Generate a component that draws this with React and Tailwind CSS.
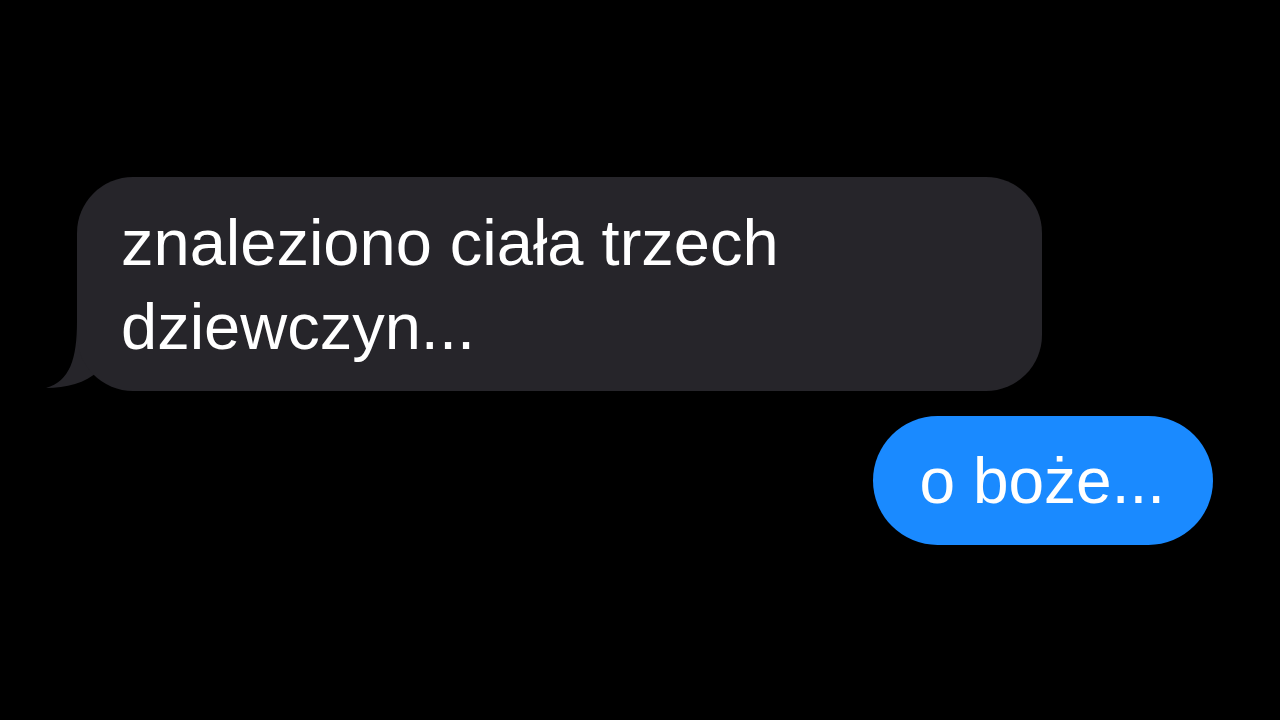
export default function App() {
  return (
    <div
      className="h-screen w-full overflow-hidden bg-black flex flex-col pt-[177px]"
      style={{ fontFamily: '"Liberation Sans", Arial, sans-serif' }}
    >
      {/* incoming message */}
      <div className="relative ml-[77px] w-[965px]">
        <svg
          className="absolute left-[-37px] bottom-0"
          width="80"
          height="70"
          viewBox="0 0 80 70"
        >
          <path
            d="M37 0 C37 38 30 60 6 67 C26 67 46 62 58 50 L75 30 L75 0 Z"
            fill="#26252a"
          />
        </svg>
        <div className="relative rounded-[56px] bg-[#26252a] pl-[44px] pr-10 pt-[24px] pb-[22px]">
          <p className="text-[65px] leading-[84px] text-white">
            znaleziono ciała trzech
            <br />
            dziewczyn...
          </p>
        </div>
      </div>

      {/* outgoing message */}
      <div className="self-end mr-[67px] mt-[25px] h-[129px] rounded-full bg-[#1a8aff] pl-[47px] pr-[48px] flex items-center">
        <p className="text-[64px] leading-[84px] text-white">o bo&#380;e...</p>
      </div>
    </div>
  );
}
